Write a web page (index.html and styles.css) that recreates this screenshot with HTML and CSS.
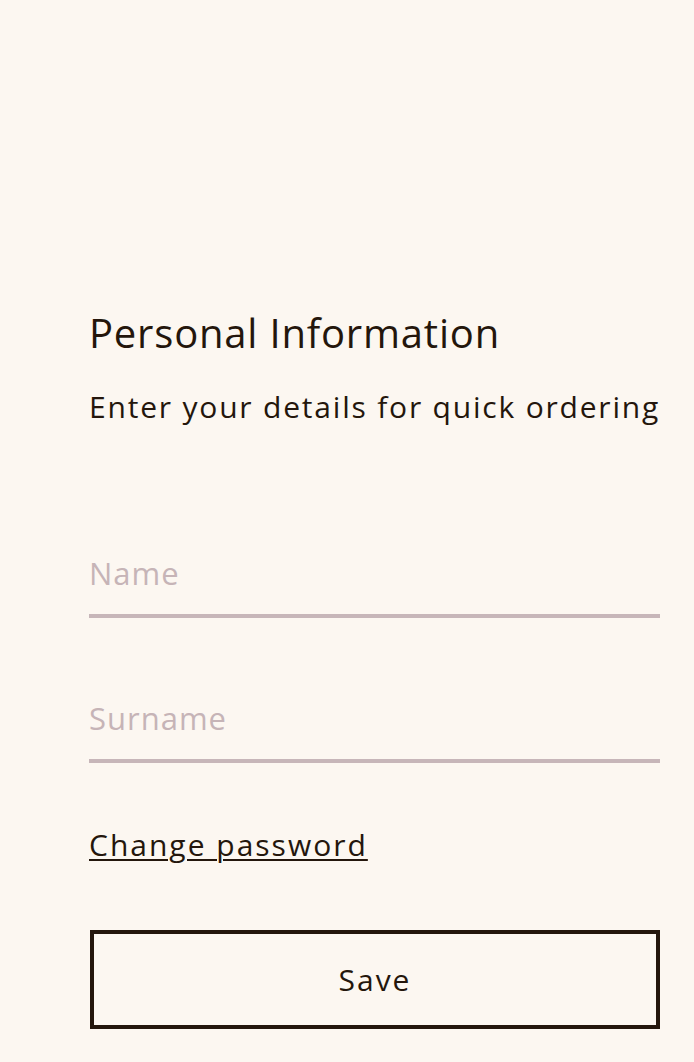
FILE: index.html
```html
<!DOCTYPE html>
<html lang="en">
<head>
<meta charset="utf-8">
<title>Personal Information</title>
<link rel="stylesheet" href="styles.css">
</head>
<body>
<main class="page">
  <section class="form">
    <h1 class="title">Personal Information</h1>
    <p class="subtitle">Enter your details for quick ordering</p>
    <div class="fields">
      <label class="field"><input class="input" type="text" placeholder="Name"></label>
      <label class="field"><input class="input" type="text" placeholder="Surname"></label>
    </div>
    <a class="link" href="#">Change password</a>
    <button class="save" type="button">Save</button>
  </section>
</main>
</body>
</html>
```

FILE: styles.css
```css
html, body {
  margin: 0;
  padding: 0;
  background: #fcf7f1;
}
body {
  font-family: "Open Sans", "Noto Sans", sans-serif;
  color: #24160c;
}
.page {
  padding: 306px 34px 0 89px;
}
.form {
  display: flex;
  flex-direction: column;
}
.title {
  margin: 0;
  font-size: 40px;
  font-weight: 400;
  line-height: 54px;
  letter-spacing: 0.8px;
  white-space: nowrap;
}
.subtitle {
  margin: 27px 0 0;
  font-size: 30px;
  line-height: 40px;
  letter-spacing: 1.8px;
  white-space: nowrap;
}
.fields {
  display: flex;
  flex-direction: column;
  gap: 70px;
  margin-top: 116px;
}
.field {
  display: block;
}
.input {
  display: block;
  width: 100%;
  box-sizing: border-box;
  border: 0;
  border-bottom: 4px solid #c7b6b9;
  background: transparent;
  padding: 10px 0 21px;
  margin: 0;
  font-family: "Open Sans", "Noto Sans", sans-serif;
  font-size: 31px;
  line-height: 40px;
  height: 75px;
  letter-spacing: 1px;
  color: #24160c;
  outline: none;
}
.input::placeholder {
  color: #c6b4b7;
  opacity: 1;
}
.link {
  margin-top: 62px;
  align-self: flex-start;
  font-size: 30px;
  line-height: 40px;
  letter-spacing: 2px;
  color: #24160c;
  text-decoration: underline;
  text-underline-offset: 3px;
  text-decoration-thickness: 2px;
}
.save {
  margin: 65px 0 0 1px;
  height: 99px;
  padding: 1px 0 0;
  box-sizing: border-box;
  border: 4px solid #24160c;
  background: transparent;
  font-family: "Open Sans", "Noto Sans", sans-serif;
  font-size: 30px;
  line-height: 40px;
  letter-spacing: 2px;
  color: #24160c;
  cursor: pointer;
}
```
